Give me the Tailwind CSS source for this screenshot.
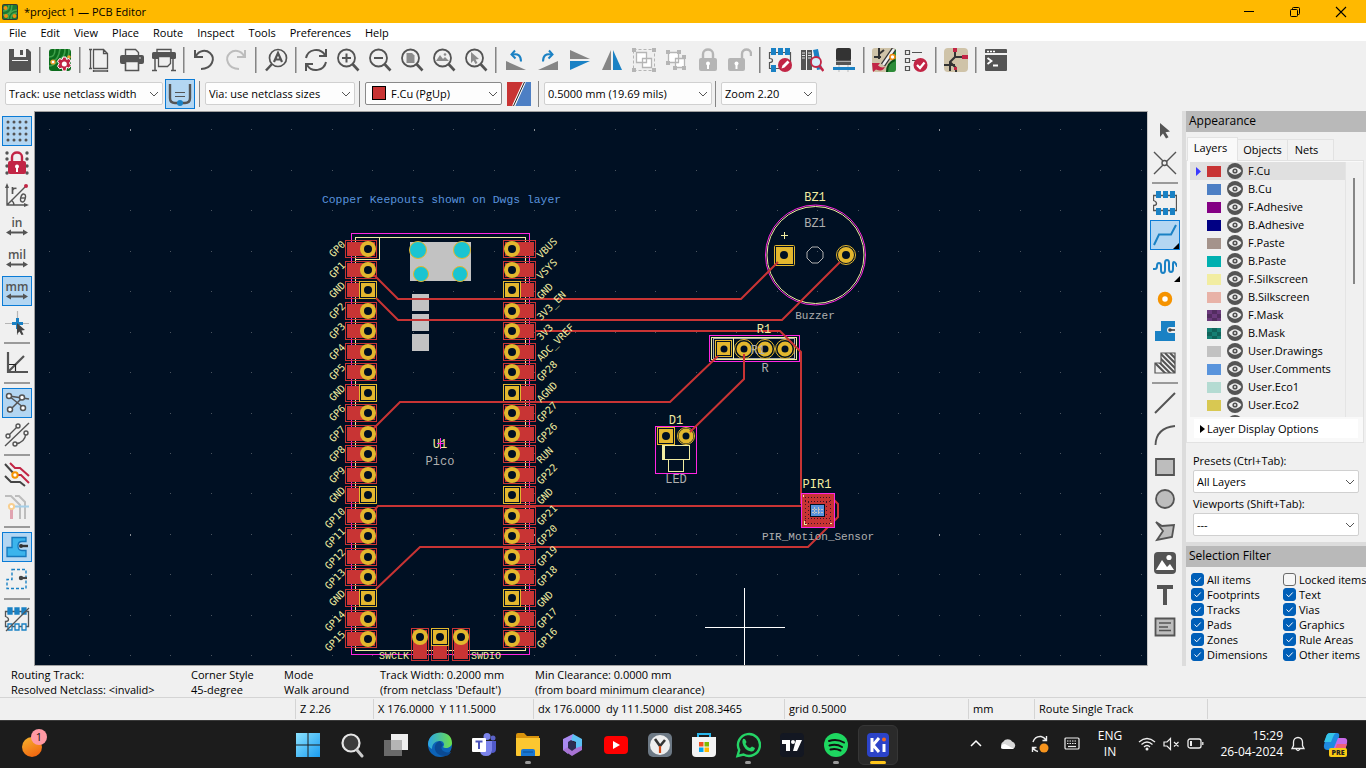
<!DOCTYPE html>
<html lang="en">
<head>
<meta charset="utf-8">
<title>*project 1 — PCB Editor</title>
<script src="https://cdn.jsdelivr.net/npm/@tailwindcss/browser@4"></script>
</head>
<body class="flex h-screen flex-col overflow-hidden bg-[#f0f0f0] font-['Open_Sans','Noto_Sans',sans-serif] text-[12px] leading-4 text-black">

<!-- Title bar -->
<header class="flex h-[23px] shrink-0 items-center bg-[#ffb900]">
  <svg class="ml-[2px] size-4" viewBox="0 0 16 16"><rect width="16" height="16" rx="2" fill="#333b33"/><rect x="1" y="1" width="14" height="14" rx="1" fill="#1d7a32"/><path d="M1 7c4 0 6-2 6-6M1 11c6 0 9-3 9-10M9 15c0-4 2-6 6-6M6 15c0-5 4-9 9-9" stroke="#4aa84f" stroke-width="1.4" fill="none"/><circle cx="3.500" cy="4" r="2" fill="#f09010"/><circle cx="4" cy="12" r="2" fill="#f09010"/><circle cx="12.500" cy="12" r="2" fill="#f09010"/></svg>
  <h1 class="ml-[6px] text-[11px]">*project 1 — PCB Editor</h1>
  <div class="ml-auto flex pr-[2px]">
    <button aria-label="Minimize" class="flex h-[22px] w-[46px] items-center justify-center"><svg width="12" height="12" viewBox="0 0 12 12"><path d="M1 5.500h10" stroke="#000"/></svg></button>
    <button aria-label="Restore" class="flex h-[22px] w-[46px] items-center justify-center"><svg width="12" height="12" viewBox="0 0 12 12" fill="none" stroke="#000"><rect x="1.500" y="3.500" width="7" height="7" rx="1"/><path d="M3.500 3.500v-1q0-1 1-1h5q1 0 1 1v5q0 1-1 1h-1"/></svg></button>
    <button aria-label="Close" class="flex h-[22px] w-[46px] items-center justify-center"><svg width="12" height="12" viewBox="0 0 12 12"><path d="M1 1l10 10M11 1L1 11" stroke="#000" stroke-width="1.100"/></svg></button>
  </div>
</header>

<!-- Menu bar -->
<nav aria-label="Main menu" class="flex h-[18px] shrink-0 items-center gap-[14px] bg-white pt-[2px] pl-[9px] text-[11px]">
  <button>File</button><button>Edit</button><button>View</button><button>Place</button><button>Route</button><button>Inspect</button><button>Tools</button><button>Preferences</button><button>Help</button>
</nav>

<!-- Main toolbar -->
<div role="toolbar" aria-label="Main" class="flex h-[37px] shrink-0 items-center pl-1 [&>button]:flex [&>button]:h-8 [&>button]:w-8 [&>button]:items-center [&>button]:justify-center [&>i]:mx-[3px] [&>i]:h-[26px] [&>i]:w-px [&>i]:bg-[#858585] [&>i]:border-r [&>i]:border-[#b8b8b8] [&>i]:box-content [&_svg]:size-6">
  <button aria-label="Save"><svg viewBox="0 0 24 24"><path d="M1 1h19l3 3v19H1z" fill="#545454"/><rect x="6" y="1" width="12" height="8" fill="#f0f0f0"/><rect x="12" y="2" width="3" height="5" fill="#545454"/><path d="M4 12h16v9H4z" fill="#f0f0f0"/><path d="M4 13h16v8H4z" fill="#545454"/></svg></button>
  <i></i>
  <button aria-label="Board setup"><svg viewBox="0 0 24 24"><rect x="1" y="1" width="22" height="22" rx="3" fill="#0c6c1c"/><path d="M1 9c5 0 6-3 6-8M2 14c7-1 9-6 10-13M1 18c5 0 7-3 10-6s6-3 6-11M21 1c0 7-1 9-3 11" stroke="#3fa04a" stroke-width="1.600" fill="none"/><circle cx="5" cy="14" r="2.600" fill="#f0a030"/><circle cx="5" cy="14" r="1.300" fill="#fff"/><circle cx="21" cy="9" r="1.800" fill="#f0a030"/><path d="M15 9h3l.6 2.400 2.400-1 2 2.600-1.500 2 1.500 2.500-2 2.700-2.400-.9L18 23h-3l-.8-3-2.700.8-2-2.600L11 15.500 9.500 13.300l2-2.700 2.600.9z" fill="#c22545" stroke="#fff" stroke-width="1"/><circle cx="16.300" cy="16" r="2.500" fill="#fff"/></svg></button>
  <i></i>
  <button aria-label="Page settings"><svg viewBox="0 0 24 24" fill="none" stroke="#545454" stroke-width="1.300"><path d="M5.500 1.500h10l4 4v15h-14zM15.500 1.500v4h4M1 1.500h3M1 20.500h3M2.500 2v18M5.500 22v2M19.500 22v2M6 23h13"/></svg></button>
  <button aria-label="Print"><svg viewBox="0 0 24 24"><path d="M5.500 1.500h10l3 3V8h-13z" fill="#f0f0f0" stroke="#545454" stroke-width="1.400"/><rect y="7" width="24" height="9" rx="2" fill="#545454"/><path d="M5.500 13.500h13v9h-13z" fill="#f0f0f0" stroke="#545454" stroke-width="1.600"/><circle cx="20" cy="10" r="1" fill="#aaa"/></svg></button>
  <button aria-label="Plot"><svg viewBox="0 0 24 24"><path d="M5 1.500h14V6H5z" fill="#f0f0f0" stroke="#545454" stroke-width="1.400"/><rect y="4" width="24" height="7" rx="1.500" fill="#545454"/><path d="M6.500 8.500h12v7l-3 3h-9z" fill="#f0f0f0" stroke="#545454" stroke-width="1.300"/><path d="M3 11v11M21 11v11M0 22.500h5M19 22.500h5" stroke="#545454" stroke-width="1.500"/></svg></button>
  <i></i>
  <button aria-label="Undo"><svg viewBox="0 0 24 24" fill="none" stroke="#545454" stroke-width="2"><path d="M3 2v7h8M4 8c3-6 10-6.500 14-3 6 5.500 2 16-9 16"/></svg></button>
  <button aria-label="Redo" disabled><svg viewBox="0 0 24 24" fill="none" stroke="#bdbdbd" stroke-width="2"><path d="M21 2v7h-8M20 8C17 2 10 1.500 6 5c-6 5.500-2 16 9 16"/></svg></button>
  <i></i>
  <button aria-label="Find"><svg viewBox="0 0 24 24" fill="none" stroke="#545454"><circle cx="14" cy="10" r="8.500" stroke-width="1.700"/><path d="M8 16l-6 6.500" stroke-width="2.500"/><path d="M10 14l4-9 4 9M11.500 11.500h5" stroke-width="2.200"/></svg></button>
  <i></i>
  <button aria-label="Refresh"><svg viewBox="0 0 24 24" fill="none" stroke="#545454" stroke-width="2"><path d="M2 10C4 1 16-1 21 7M22 1v7h-7M22 14c-2 9-14 11-19 3M2 23v-7h7"/></svg></button>
  <button aria-label="Zoom in"><svg viewBox="0 0 24 24" fill="none" stroke="#545454"><circle cx="10.500" cy="10" r="8.500" stroke-width="1.800"/><path d="M16.500 16l6 6.500" stroke-width="2.600"/><path d="M6 10h9M10.500 5.500v9" stroke-width="2"/></svg></button>
  <button aria-label="Zoom out"><svg viewBox="0 0 24 24" fill="none" stroke="#545454"><circle cx="10.500" cy="10" r="8.500" stroke-width="1.800"/><path d="M16.500 16l6 6.500" stroke-width="2.600"/><path d="M6 10h9" stroke-width="2"/></svg></button>
  <button aria-label="Zoom to fit"><svg viewBox="0 0 24 24" fill="none" stroke="#545454"><circle cx="10.500" cy="10" r="8.500" stroke-width="1.800"/><path d="M16.500 16l6 6.500" stroke-width="2.600"/><path d="M6.500 5h5.500l2.500 2.500V15h-8z" fill="#8c8c8c" stroke="none"/></svg></button>
  <button aria-label="Zoom to objects"><svg viewBox="0 0 24 24" fill="none" stroke="#545454"><circle cx="10.500" cy="10" r="8.500" stroke-width="1.800"/><path d="M16.500 16l6 6.500" stroke-width="2.600"/><path d="M4 13l4-6 3 4 2-2 4 4z" fill="#8c8c8c" stroke="none"/><circle cx="13" cy="6.500" r="1.300" fill="#8c8c8c" stroke="none"/></svg></button>
  <button aria-label="Zoom to selection"><svg viewBox="0 0 24 24" fill="none" stroke="#545454"><circle cx="10.500" cy="10" r="8.500" stroke-width="1.800"/><path d="M16.500 16l6 6.500" stroke-width="2.600"/><path d="M7 4l8 7-3.500.5 2 3.500-2 1-2-3.500L7 15z" fill="#8c8c8c" stroke="none"/></svg></button>
  <i></i>
  <button aria-label="Rotate counterclockwise"><svg viewBox="0 0 24 24"><path d="M2 13v9h20z" fill="#858585"/><path d="M9 6.500c5-1 8 1 8 7" stroke="#1a81c4" stroke-width="2" fill="none"/><path d="M11 2.500L7.500 6.500l4 4" stroke="#1a81c4" stroke-width="2" fill="none"/></svg></button>
  <button aria-label="Rotate clockwise"><svg viewBox="0 0 24 24"><path d="M22 13v9H2z" fill="#858585"/><path d="M15 6.500c-5-1-8 1-8 7" stroke="#1a81c4" stroke-width="2" fill="none"/><path d="M13 2.500l3.500 4-4 4" stroke="#1a81c4" stroke-width="2" fill="none"/></svg></button>
  <button aria-label="Mirror vertically"><svg viewBox="0 0 24 24"><path d="M2 2v9h20z" fill="#858585"/><path d="M2 22v-9h20z" fill="#1a81c4"/></svg></button>
  <button aria-label="Mirror horizontally"><svg viewBox="0 0 24 24"><path d="M2 22h9V2z" fill="#858585"/><path d="M22 22h-9V2z" fill="#1a81c4"/></svg></button>
  <button aria-label="Group" disabled><svg viewBox="0 0 24 24" stroke="#b5b5b5"><path d="M1.500 1.500h21v21h-21z" fill="none" stroke-dasharray="3 2"/><path d="M0 0h4v4H0zM20 0h4v4h-4zM0 20h4v4H0zM20 20h4v4h-4z" fill="#b5b5b5" stroke="none"/><path d="M4.500 4.500h10v10h-10zM10.500 10.500h9v9h-9z" fill="#fff" stroke-width="1.300"/></svg></button>
  <button aria-label="Ungroup" disabled><svg viewBox="0 0 24 24" stroke="#b5b5b5"><path d="M4.500 4.500h10v10h-10zM11.500 10.500h9v9h-9z" fill="#fff" stroke-width="1.300"/><path d="M2 2h4v4H2zM13 2h4v4h-4zM2 13h4v4H2zM9 18h4v4H9zM18 7h4v4h-4zM18 18h4v4h-4z" fill="#b5b5b5" stroke="none"/></svg></button>
  <button aria-label="Lock" disabled><svg viewBox="0 0 24 24"><path d="M7 11V6c0-6 10-6 10 0v5" fill="none" stroke="#b5b5b5" stroke-width="2.400"/><rect x="3" y="10" width="18" height="13" rx="2" fill="#b5b5b5"/><circle cx="12" cy="15.500" r="2" fill="#fff"/><path d="M11 16h2v5h-2z" fill="#fff"/></svg></button>
  <button aria-label="Unlock" disabled><svg viewBox="0 0 24 24"><path d="M14 11V6c0-6 9-6 9 0v2" fill="none" stroke="#b5b5b5" stroke-width="2.400"/><rect x="0" y="10" width="17" height="13" rx="2" fill="#b5b5b5"/><circle cx="8.500" cy="15.500" r="2" fill="#fff"/><path d="M7.500 16h2v5h-2z" fill="#fff"/></svg></button>
  <i></i>
  <button aria-label="Footprint editor"><svg viewBox="0 0 24 24"><path d="M22.500 4.500h-21v6q3 0 3 2t-3 2v6h21z" fill="none" stroke="#545454" stroke-width="1.200"/><path d="M3 0h5v7H3zM10 0h5v7h-5zM17 0h5v7h-5zM3 17h5v7H3z" fill="#1a81c4"/><circle cx="17" cy="17" r="7" fill="#c22545"/><path d="M13.500 20.500l1-3 5-5 2 2-5 5z" fill="#fff"/></svg></button>
  <button aria-label="Footprint libraries"><svg viewBox="0 0 24 24"><path d="M1 2h5v20H1zM7 2h5v20H7z" fill="#545454"/><path d="M2 5h3M2 7.500h3M2 10h3M8 5h3M8 7.500h3M8 10h3" stroke="#ddd"/><path d="M13 2l5-1 4 20-5 1z" fill="#1a81c4"/><circle cx="16" cy="14" r="5" fill="#d8ecf8" stroke="#c22545" stroke-width="1.800"/><path d="M19.500 18l4 5" stroke="#c22545" stroke-width="2.600"/></svg></button>
  <button aria-label="3D viewer"><svg viewBox="0 0 24 24"><rect x="4" y="0" width="15" height="13" rx="2" fill="#333"/><path d="M4 12h15v5H4z" fill="#545454"/><path d="M4 13.500h15" stroke="#aaa"/><path d="M7 17v7M16 17v7" stroke="#bbb"/><path d="M1 19h22v3H1z" fill="#1a81c4"/></svg></button>
  <i></i>
  <button aria-label="Update from schematic"><svg viewBox="0 0 24 24"><rect width="24" height="24" rx="3" fill="#cfc3a8"/><path d="M14 24L24 7v14q0 3-3 3z" fill="#2c8c38"/><path d="M17 8L24 1v8z" fill="#2c8c38"/><path d="M7 0v11M2 9h7M7 6l5-4" stroke="#333" stroke-width="2"/><path d="M11 17L22 1" stroke="#333" stroke-width="5"/><path d="M11 17L22 1" stroke="#f0f0f0" stroke-width="2.500"/><circle cx="20.500" cy="9" r="2.500" fill="#fff" stroke="#f08c10" stroke-width="1.600"/><path d="M15 24c0-6 3-10 8-12" stroke="#0a4f16" stroke-width="2" fill="none"/><path d="M0 15h8l-2 2.500q4 3.500 7 1-2 6-9 3L1 24z" fill="#c22545"/></svg></button>
  <button aria-label="Design rules checker"><svg viewBox="0 0 24 24" fill="none" stroke="#545454"><path d="M1.500 2.500h4v4h-4zM1.500 10.500h4v4h-4zM1.500 18.500h4v4h-4zM8 4.500h10M8 12.500h5" stroke-width="1.200"/><circle cx="16.500" cy="17" r="7" fill="#c22545" stroke="none"/><path d="M13 17l3 3 4.500-5.500" stroke="#fff" stroke-width="2.200"/></svg></button>
  <i></i>
  <button aria-label="Schematic editor"><svg viewBox="0 0 24 24"><rect width="24" height="24" rx="4" fill="#cfc3a8"/><path d="M11 2v7l-5 5v9M11 9h11M6 17H0M6 14l6 6v4M2 17h9" stroke="#333" stroke-width="2" fill="none"/><path d="M9 0h4v4H9zM18 7h6v4h-6zM10 19h3v3h-3z" fill="#c22545"/></svg></button>
  <i></i>
  <button aria-label="Scripting console"><svg viewBox="0 0 24 24"><path d="M1 2q0-1 1-1h20q1 0 1 1v3H1zM1 7h22v15q0 1-1 1H2q-1 0-1-1z" fill="#545454"/><path d="M3 3.500h2M6 3.500h2M9 3.500h2" stroke="#fff" stroke-width="1.500"/><path d="M3.500 10l4 3-4 3M9 17.500h5" stroke="#fff" stroke-width="1.800" fill="none"/></svg></button>
</div>

<!-- Track, via, layer, grid and zoom selectors -->
<div role="toolbar" aria-label="Properties" class="flex h-[33px] shrink-0 items-center pb-[2px] pl-[5px] text-[11px] [&>i]:h-[26px] [&>i]:w-px [&>i]:bg-[#858585] [&_select]:h-[23px] [&_select]:w-full [&_select]:appearance-none [&_select]:rounded-[2px] [&_select]:border [&_select]:border-[#d0d0d0] [&_select]:bg-[#fdfdfd] [&_select]:pl-[3px] [&>div]:relative">
  <div class="w-[158px]"><select aria-label="Track width"><option>Track: use netclass width</option></select><svg class="pointer-events-none absolute top-2 right-1 h-2 w-[10px]" viewBox="0 0 10 8" fill="none" stroke="#555"><path d="M1 2l4 4 4-4"/></svg></div>
  <button aria-label="Use existing track width" class="ml-[2px] flex size-[30px] items-center justify-center border border-[#0a7bd6] bg-[#b3d6f2]"><svg width="24" height="24" viewBox="0 0 24 24" fill="none" stroke="#545454" stroke-width="2.400"><path d="M2 2v14q0 5 5 5h10q5 0 5-5V2"/><path d="M7 10.500h10M7 14.500h10" stroke-width="1.200"/><circle cx="12" cy="21" r="3" fill="#1a81c4" stroke="none"/></svg></button>
  <i class="mx-[4px]"></i>
  <div class="ml-px w-[150px]"><select aria-label="Via size"><option>Via: use netclass sizes</option></select><svg class="pointer-events-none absolute top-2 right-1 h-2 w-[10px]" viewBox="0 0 10 8" fill="none" stroke="#555"><path d="M1 2l4 4 4-4"/></svg></div>
  <i class="mx-[4px]"></i>
  <div class="ml-px w-[137px]"><select aria-label="Active layer" class="border-[#8a8a8a]! pl-[25px]!"><option>F.Cu (PgUp)</option></select><span class="pointer-events-none absolute top-[4px] left-[7px] size-[14px] border border-black bg-[#c83434]"></span><svg class="pointer-events-none absolute top-2 right-1 h-2 w-[10px]" viewBox="0 0 10 8" fill="none" stroke="#555"><path d="M1 2l4 4 4-4"/></svg></div>
  <button aria-label="Layer pair" class="ml-[5px]"><svg width="24" height="24" viewBox="0 0 24 24"><path d="M0 0h17L6 24H0z" fill="#c83434"/><path d="M18 0h6v24H8z" fill="#4d7fc4"/><path d="M17.500 0L6.500 24" stroke="#fff" stroke-width="3"/><path d="M17.500 0L6.500 24" stroke="#222" stroke-width="1"/></svg></button>
  <i class="mr-[5px] ml-[7px]"></i>
  <div class="w-[168px]"><select aria-label="Grid"><option>0.5000 mm (19.69 mils)</option></select><svg class="pointer-events-none absolute top-2 right-1 h-2 w-[10px]" viewBox="0 0 10 8" fill="none" stroke="#555"><path d="M1 2l4 4 4-4"/></svg></div>
  <i class="mr-[5px] ml-[3px]"></i>
  <div class="w-[96px]"><select aria-label="Zoom"><option>Zoom 2.20</option></select><svg class="pointer-events-none absolute top-2 right-1 h-2 w-[10px]" viewBox="0 0 10 8" fill="none" stroke="#555"><path d="M1 2l4 4 4-4"/></svg></div>
</div>

<main class="flex min-h-0 flex-1">
  <!-- Display options -->
  <div role="toolbar" aria-label="Display options" class="flex w-[34px] shrink-0 flex-col items-center pt-1 pr-px [&>button]:my-px [&>button]:flex [&>button]:size-[30px] [&>button]:shrink-0 [&>button]:items-center [&>button]:justify-center [&>i]:my-[3px] [&>i]:h-[2px] [&>i]:w-[26px] [&>i]:shrink-0 [&>i]:bg-[#9a9a9a] [&_svg]:size-6 [&_svg]:overflow-visible [&>button[aria-pressed]]:border [&>button[aria-pressed]]:border-[#0a7bd6] [&>button[aria-pressed]]:bg-[#b3d6f2]">
    <button aria-label="Show grid" aria-pressed="true"><svg viewBox="0 0 24 24"><path d="M3 3h.01M9 3h.01M15 3h.01M21 3h.01M3 9h.01M9 9h.01M15 9h.01M21 9h.01M3 15h.01M9 15h.01M15 15h.01M21 15h.01M3 21h.01M9 21h.01M15 21h.01M21 21h.01" stroke="#545454" stroke-width="3" stroke-linecap="round"/></svg></button>
    <button aria-label="Grid overrides"><svg viewBox="0 0 24 24"><path d="M2 2h.01M22 2h.01M2 8h.01M22 8h.01M2 15h.01M22 15h.01M2 22h.01M22 22h.01" stroke="#545454" stroke-width="3.400" stroke-linecap="round"/><path d="M7 11V6c0-6 10-6 10 0v5" fill="none" stroke="#c22545" stroke-width="2.400"/><rect x="3" y="10" width="18" height="13" rx="2" fill="#c22545"/><circle cx="12" cy="15.500" r="2" fill="#fff"/><path d="M11 16h2v5h-2z" fill="#fff"/></svg></button>
    <button aria-label="Polar coordinates"><svg viewBox="0 0 24 24" fill="none" stroke="#545454" stroke-width="1.400"><path d="M2 2v20h20M2 22L20 4M6 17q3 2 3 5"/><path d="M2 0L0 5h4zM24 22l-5-2v4z" fill="#545454" stroke="none"/><circle cx="21" cy="3" r="2" fill="#c22545" stroke="none"/><path d="M7.500 4v7M7.500 7.500q1-3 4-2" stroke-width="1.700"/><ellipse cx="18" cy="15" rx="2.300" ry="4" transform="rotate(15 18 15)"/><path d="M16 15h4"/></svg></button>
    <button aria-label="Inches"><svg viewBox="0 0 24 24"><text x="12" y="12" text-anchor="middle" font-size="12" font-weight="600" fill="#545454">in</text><path d="M1 17.500l5-3v2h12v-2l5 3-5 3v-2H6v2z" fill="#545454"/></svg></button>
    <button aria-label="Mils"><svg viewBox="0 0 24 24"><text x="12" y="12" text-anchor="middle" font-size="12" font-weight="600" fill="#545454">mil</text><path d="M1 17.500l5-3v2h12v-2l5 3-5 3v-2H6v2z" fill="#545454"/></svg></button>
    <button aria-label="Millimeters" aria-pressed="true"><svg viewBox="0 0 24 24"><text x="12" y="12" text-anchor="middle" font-size="12" font-weight="600" fill="#545454">mm</text><path d="M1 17.500l5-3v2h12v-2l5 3-5 3v-2H6v2z" fill="#545454"/></svg></button>
    <button aria-label="Full-window crosshairs"><svg viewBox="0 0 24 24"><path d="M0 12.500h24M12.500 0v24" stroke="#b5b5b5" stroke-width="1.200"/><path d="M7 12.500h11M12.500 7v11" stroke="#1a81c4" stroke-width="3"/><path d="M12 12l8 7-3.500.5 2 4-2 .5-2-3.500L12 23z" fill="#444"/></svg></button>
    <i></i>
    <button aria-label="Limit to 45 degrees"><svg viewBox="0 0 24 24" fill="none" stroke="#545454" stroke-width="2.200"><path d="M3 1v20h20M3 21L19 5"/><path d="M4 13.500h6.500V20" stroke-width="1.200" stroke="#222"/></svg></button>
    <i></i>
    <button aria-label="Show ratsnest" aria-pressed="true"><svg viewBox="0 0 24 24" stroke="#545454" stroke-width="1.500"><path d="M4 5l15 12M6 18L17 7M4 5l20 3"/><g fill="#fff"><circle cx="4" cy="5" r="2.500"/><circle cx="17" cy="6.500" r="2.500"/><circle cx="5" cy="18.500" r="2.500"/><circle cx="18" cy="17" r="2.500"/></g></svg></button>
    <button aria-label="Curved ratsnest"><svg viewBox="0 0 24 24" stroke="#545454" stroke-width="1.400" fill="none"><path d="M0 23L24 0M3 13L13 3M10 21q10-1 11-11"/><g fill="#f0f0f0"><circle cx="3" cy="13" r="2"/><circle cx="13" cy="3" r="2"/><circle cx="10" cy="21" r="2"/><circle cx="21" cy="10" r="2"/></g></svg></button>
    <i></i>
    <button aria-label="Inactive layer view"><svg viewBox="0 0 24 24" fill="none" stroke-width="2"><path d="M5 0l5 5h5l9 8" stroke="#c22545"/><path d="M12 12h4l8 8" stroke="#c22545"/><path d="M0 1l10 11M0 13l6 6h9l5 4" stroke="#444"/><circle cx="10" cy="12" r="2.700" fill="#fff" stroke="#f59300"/></svg></button>
    <button aria-label="Net color mode"><svg viewBox="0 0 24 24" fill="none" stroke-width="2"><path d="M0 1h6l9 9v14M10 1h4l6 6v17" stroke="#bdbdbd"/><path d="M8 11.500h16" stroke="#a5cfe8"/><path d="M6.500 14v10" stroke="#e0a3b0" stroke-width="3"/><circle cx="6.500" cy="11.500" r="2.600" fill="#fff" stroke="#f8cf90"/></svg></button>
    <i></i>
    <button aria-label="Show filled zones" aria-pressed="true"><svg viewBox="0 0 24 24"><path d="M7 2.500h14v4h-4q-4 0-4 4.500t4 4.500h4v6H2v-9h5z" fill="#3bb4ec" stroke="#1478bd" stroke-width="1.300"/><path d="M16 11h7" stroke="#333" stroke-width="2.400"/><circle cx="16" cy="11" r="2" fill="#333"/></svg></button>
    <button aria-label="Zone outlines"><svg viewBox="0 0 24 24"><path d="M7 2.500h14v19H2v-9h5z" fill="none" stroke="#1a81c4" stroke-width="1.400" stroke-dasharray="3 2"/><path d="M14 11h8" stroke="#444" stroke-width="2.200"/><circle cx="16" cy="11" r="2.200" fill="#444"/></svg></button>
    <i></i>
    <button aria-label="Sketch pads"><svg viewBox="0 0 24 24" fill="none" stroke="#545454" stroke-width="1.300"><path d="M23.500 4.500H.5v5q3 1 3 3t-3 2v5h23z"/><path d="M3 1h4v6H3zM10 1h4v6h-4zM17 1h4v6h-4z" fill="#1a81c4" stroke="#1a81c4"/><path d="M3 17h4v6H3zM10 17h4v6h-4zM17 17h4v6h-4z" fill="#f0f0f0" stroke="#1a81c4"/><path d="M1 24L24 1"/></svg></button>
  </div>

  <!-- Board canvas -->
  <div class="min-w-0 flex-1 border border-t-[#a0a0a0] border-r-[#c8c8c8] border-b-[#a0a0a0] border-l-[#a0a0a0] bg-[#001023]">
    <svg id="board" class="block size-full" viewBox="35 112 1112 553" preserveAspectRatio="xMidYMid slice" fill="none" role="img" aria-label="PCB layout">
      <g id="grid"></g>
      <g shape-rendering="crispEdges">
        <path d="M410 242h61v39h-61zM412 294h17v17h-17zM412 314h17v17h-17zM412 334h17v17h-17z" fill="#c2c2c2"/>
        <rect x="351.500" y="233.500" width="178" height="421" stroke="#ff26e2"/>
        <path d="M355.500 237.500h170v413h-170zM379.500 237.500v22h-24" stroke="#f2eda1"/>
      </g>
      <g fill="#1ac4d2" stroke="#e3b72e"><circle cx="418" cy="250" r="8.500"/><circle cx="462" cy="250" r="8.500"/><circle cx="421" cy="274" r="7.500"/><circle cx="460" cy="274" r="7.500"/></g>
      <g id="pads"></g>

      <!-- BZ1 -->
      <circle cx="815.500" cy="255" r="50" stroke="#ff26e2"/><circle cx="815.500" cy="255" r="48.500" stroke="#f2eda1"/>
      <path d="M812 247h6l5 5v6l-5 5h-6l-5-5v-6z" stroke="#afafaf"/>
      <rect x="774.500" y="245.500" width="20" height="20" rx="1" stroke="#e3b72e"/><rect x="776" y="247" width="17" height="17" fill="#e3b72e"/><circle cx="784" cy="255" r="4" fill="#001023"/>
      <circle cx="846" cy="255" r="9.500" stroke="#e3b72e"/><circle cx="846" cy="255" r="6" stroke="#e3b72e" stroke-width="4"/>
      <path d="M781 235.500h7M784.500 232v7" stroke="#f2eda1"/>

      <!-- R1 -->
      <g shape-rendering="crispEdges"><rect x="709.500" y="335.500" width="90" height="26" stroke="#ff26e2"/><rect x="711.500" y="337.500" width="85" height="22" stroke="#f2eda1"/><rect x="713.500" y="338.500" width="81" height="20" stroke="#afafaf"/><path d="M733.500 338v21" stroke="#f2eda1"/><rect x="715.500" y="340.500" width="16" height="16" stroke="#e3b72e"/><rect x="717" y="342" width="13" height="13" fill="#e3b72e"/></g>
      <circle cx="724" cy="349" r="3.500" fill="#001023"/>
      <g stroke="#e3b72e"><circle cx="744" cy="349" r="9.500"/><circle cx="765" cy="349" r="9.500"/><circle cx="785" cy="349" r="9.500"/><g stroke-width="4"><circle cx="744" cy="349" r="5.500"/><circle cx="765" cy="349" r="5.500"/><circle cx="785" cy="349" r="5.500"/></g></g>

      <!-- D1 -->
      <g shape-rendering="crispEdges"><rect x="655.500" y="426.500" width="41" height="47" stroke="#ff26e2"/><rect x="657.500" y="427.500" width="17" height="17" stroke="#e3b72e"/><rect x="659" y="429" width="14" height="14" fill="#e3b72e"/><path d="M662.500 445.500h27v14h-27zM668.500 459.500h15v12h-15zM663.500 445v14M664.500 445v14" stroke="#f2eda1"/></g>
      <circle cx="666" cy="436" r="4" fill="#001023"/><circle cx="686" cy="436" r="8.500" stroke="#e3b72e"/><circle cx="686" cy="436" r="5.500" stroke="#e3b72e" stroke-width="4"/>

      <!-- Routed tracks on F.Cu -->
      <path d="M374 275l24 24H741l37-37M376 298l22 22H782l58-58M535 331h245l21 21V504M374 428l26-26h270l48-46M744 354v25L690 432M374 511l4-5h425M376 589l44-42h388l30-30v-13l-10-10" stroke="#c83434" stroke-width="2"/>

      <!-- PIR1 -->
      <g shape-rendering="crispEdges"><rect x="802" y="494" width="32" height="33" fill="#c83434"/><path d="M805 497.500h26M805 501.500h26M805 518.500h26M805 523.500h26" stroke="#3a1024" stroke-dasharray="1 2"/><path d="M805.500 500v22M808.500 502v18M826.500 502v18M830.500 500v22" stroke="#3a1024" stroke-dasharray="1 3"/><rect x="810" y="504" width="15" height="13" fill="#001023"/><rect x="811" y="505" width="13" height="11" fill="#5a93dd"/><path d="M812 509.500h11M812 512.500h11M814.500 507v7M818.500 507v7" stroke="#c2c2c2" stroke-dasharray="2 1"/><rect x="801.500" y="493.500" width="33" height="34" stroke="#ff26e2"/><path d="M803 494.500v2M804 521v3h3M830 523h2" stroke="#f2eda1"/></g>

      <g id="labels" class="font-['DejaVu_Sans_Mono',monospace]" font-size="10" fill="#f2eda1"></g>
      <g class="font-['Liberation_Mono',monospace]" font-size="12" text-anchor="middle">
        <text x="441.500" y="203" fill="#5a93dd" font-size="11.400">Copper Keepouts shown on Dwgs layer</text>
        <g fill="#f2eda1"><text x="815" y="201">BZ1</text><text x="764" y="333">R1</text><text x="676" y="424">D1</text><text x="817" y="488">PIR1</text><text x="440" y="448">U1</text></g>
        <g fill="#afafaf"><text x="815" y="227">BZ1</text><text x="815" y="319" font-size="11">Buzzer</text><text x="758" y="354">R1</text><text x="765" y="372">R</text><text x="676" y="483">LED</text><text x="440" y="465">Pico</text><text x="818" y="540" font-size="11">PIR_Motion_Sensor</text></g>
        <g fill="#f2eda1" font-size="10"><text x="394" y="659">SWCLK</text><text x="486" y="659">SWDIO</text></g>
      </g>
      <path d="M437 443.500h7M440.500 438v11" stroke="#ff26e2"/>
      <path d="M705 627.500h80M744.500 588v78" stroke="#fff" shape-rendering="crispEdges"/>
    </svg>
  </div>

  <!-- Drawing tools -->
  <div role="toolbar" aria-label="Tools" class="flex w-[34px] shrink-0 flex-col items-center pt-1 [&>button]:relative [&>button]:my-px [&>button]:flex [&>button]:size-[30px] [&>button]:shrink-0 [&>button]:items-center [&>button]:justify-center [&>i]:my-[3px] [&>i]:h-[2px] [&>i]:w-[26px] [&>i]:shrink-0 [&>i]:bg-[#9a9a9a] [&_svg]:size-6 [&>button[aria-pressed]]:border [&>button[aria-pressed]]:border-[#0a7bd6] [&>button[aria-pressed]]:bg-[#b3d6f2]">
    <button aria-label="Select"><svg viewBox="0 0 24 24"><path d="M7 4l10 8.500-4.500.7 3 5-2.500 1.300-3-5L7 18z" fill="#545454"/></svg></button>
    <button aria-label="Local ratsnest"><svg viewBox="0 0 24 24" fill="none" stroke="#545454" stroke-width="1.400"><path d="M1 1l22 22M23 1L1 23"/><circle cx="11.500" cy="12" r="2.500" fill="#f0f0f0"/></svg></button>
    <i></i>
    <button aria-label="Add footprint"><svg viewBox="0 0 24 24"><path d="M23.500 4.500H.5v5q3 1 3 3t-3 2v5h23z" fill="none" stroke="#545454" stroke-width="1.300"/><path d="M3 0h5v7H3zM10 0h5v7h-5zM17 0h5v7h-5zM3 17h5v7H3zM10 17h5v7h-5zM17 17h5v7h-5z" fill="#1a81c4"/></svg></button>
    <button aria-label="Route tracks" aria-pressed="true"><svg viewBox="0 0 24 24"><path d="M1 22l5-10.500h12L23 2" fill="none" stroke="#1a81c4" stroke-width="2"/></svg><svg class="absolute right-0 bottom-0 size-[6px]!" viewBox="0 0 6 6"><path d="M6 0v6H0z"/></svg></button>
    <button aria-label="Tune length"><svg viewBox="0 0 24 24"><path d="M0 14h2q2 0 2-3 0-3 2-3t2 3v4q0 3 2 3t2-3V8q0-3 2-3t2 3v6q0 3 2 3t2-3V9q0-2 1-2t2 2 1 2h2" fill="none" stroke="#1a81c4" stroke-width="2"/></svg><svg class="absolute right-0 bottom-0 size-[6px]!" viewBox="0 0 6 6"><path d="M6 0v6H0z"/></svg></button>
    <button aria-label="Add via"><svg viewBox="0 0 24 24"><circle cx="12" cy="12" r="5" fill="#fff" stroke="#f59300" stroke-width="4.500"/></svg></button>
    <button aria-label="Add zone"><svg viewBox="0 0 24 24"><path d="M8 2h14v6h-5q-3 0-3 3t3 3h5v8H2V12h6z" fill="#1a81c4"/><path d="M17 11h5" stroke="#444" stroke-width="1.600"/><circle cx="17" cy="11" r="1.800" fill="#444"/></svg></button>
    <button aria-label="Add rule area"><svg viewBox="0 0 24 24"><defs><clipPath id="keepout"><path d="M8 2h14v20H2V12h6z"/></clipPath></defs><path clip-path="url(#keepout)" d="M-8 2l22 22M-3 2l22 22M2 2l22 22M7 2l22 22M12 2l22 22M17 2l22 22" stroke="#545454" stroke-width="2"/><path d="M8 2h14v20H2V12h6z" fill="none" stroke="#545454" stroke-width="1.200"/></svg></button>
    <i></i>
    <button aria-label="Draw line"><svg viewBox="0 0 24 24"><path d="M2 22L22 2" stroke="#545454" stroke-width="2"/></svg></button>
    <button aria-label="Draw arc"><svg viewBox="0 0 24 24"><path d="M2.500 22Q3 5 22 3" fill="none" stroke="#545454" stroke-width="1.800"/></svg></button>
    <button aria-label="Draw rectangle"><svg viewBox="0 0 24 24"><path d="M3 4h18v16H3z" fill="#bdbdbd" stroke="#545454" stroke-width="1.800"/></svg></button>
    <button aria-label="Draw circle"><svg viewBox="0 0 24 24"><circle cx="12" cy="12" r="9" fill="#bdbdbd" stroke="#545454" stroke-width="1.800"/></svg></button>
    <button aria-label="Draw polygon"><svg viewBox="0 0 24 24"><path d="M3 3l6 4 12-1-2 12-15 3 6-9z" fill="#bdbdbd" stroke="#545454" stroke-width="1.800"/></svg></button>
    <button aria-label="Add image"><svg viewBox="0 0 24 24"><rect x="1" y="1" width="22" height="22" rx="4" fill="#545454"/><path d="M3 19l6-10 5 7 3-3 4 6z" fill="#fff"/><circle cx="16" cy="6.500" r="2.600" fill="#fff"/></svg></button>
    <button aria-label="Add text"><svg viewBox="0 0 24 24"><path d="M4 2h16v4h-6v16h-4V6H4z" fill="#545454"/></svg></button>
    <button aria-label="Add text box"><svg viewBox="0 0 24 24"><path d="M2.500 3.500h19v17h-19z" fill="#bdbdbd" stroke="#545454" stroke-width="1.800"/><path d="M6 8h12M6 12h9M6 15.500h12" stroke="#545454" stroke-width="1.500"/></svg></button>
  </div>

  <!-- Side panels -->
  <aside class="flex w-[184px] shrink-0 flex-col border-l-4 border-[#dcdcdc]">
    <h2 class="h-[21px] shrink-0 bg-[#b9b9b9] pl-[3px] leading-5">Appearance</h2>
    <div role="tablist" class="mt-[5px] flex h-[23px] shrink-0 items-end pl-px text-center">
      <button role="tab" aria-selected="true" class="z-10 -mb-px h-6 w-[51px] border border-b-0 border-[#e2e2e2] bg-[#f9f9f9] pr-1 pb-1 text-[11px]">Layers</button>
      <button role="tab" class="h-[21px] w-[50px] border border-b-0 border-l-0 border-[#e2e2e2] bg-[#f2f2f2] text-[11px]">Objects</button>
      <button role="tab" class="h-[21px] w-[46px] border border-b-0 border-l-0 border-[#e2e2e2] bg-[#f2f2f2] pr-2 text-[11px]">Nets</button>
    </div>
    <div class="mr-[2px] flex h-[283px] shrink-0 flex-col border border-[#e2e2e2] bg-[#f9f9f9] pt-px pl-[3px]">
      <div class="flex h-[255px] shrink-0 overflow-hidden bg-[#f0f0f0]">
        <ul id="layers" class="w-[156px] border-r border-[#e4e4e4]"></ul>
        <div class="mt-4 ml-[7px] h-[106px] w-[2px] bg-[#868686]"></div>
      </div>
      <button class="mt-[2px] mr-[5px] ml-1 flex h-[19px] shrink-0 items-center gap-[2px] bg-white pl-[6px] text-[11px]"><svg width="5" height="8" viewBox="0 0 5 8"><path d="M0 0l5 4-5 4z"/></svg>Layer Display Options</button>
    </div>
    <div class="flex flex-col px-[7px] pt-[10px] text-[11px]">
      <label for="presets">Presets (Ctrl+Tab):</label>
      <div class="relative mt-px"><select id="presets" class="h-[23px] w-full appearance-none rounded-[2px] border border-[#d0d0d0] bg-white pl-[3px]"><option>All Layers</option></select><svg class="pointer-events-none absolute top-2 right-1 h-2 w-[10px]" viewBox="0 0 10 8" fill="none" stroke="#555"><path d="M1 2l4 4 4-4"/></svg></div>
      <label for="viewports" class="mt-[3px]">Viewports (Shift+Tab):</label>
      <div class="relative mt-px"><select id="viewports" class="h-[23px] w-full appearance-none rounded-[2px] border border-[#d0d0d0] bg-white pl-[3px]"><option>---</option></select><svg class="pointer-events-none absolute top-2 right-1 h-2 w-[10px]" viewBox="0 0 10 8" fill="none" stroke="#555"><path d="M1 2l4 4 4-4"/></svg></div>
    </div>
    <h2 class="mt-[6px] h-[25px] shrink-0 border-t-4 border-[#dcdcdc] bg-[#b9b9b9] pl-[3px] leading-5">Selection Filter</h2>
    <div id="filters" class="mt-[5px] grid grid-cols-[92px_1fr] pl-[5px] text-[11px]"></div>
  </aside>
</main>

<!-- Message panel -->
<section class="flex h-8 shrink-0 border-b border-[#d4d4d4] pt-[1px] pl-[11px] text-[11px] leading-[15px] whitespace-nowrap">
  <p class="w-[180px]">Routing Track:<br>Resolved Netclass: &lt;invalid&gt;</p>
  <p class="w-[93px]">Corner Style<br>45-degree</p>
  <p class="w-[96px]">Mode<br>Walk around</p>
  <p class="w-[155px]">Track Width: 0.2000 mm<br>(from netclass 'Default')</p>
  <p>Min Clearance: 0.0000 mm<br>(from board minimum clearance)</p>
</section>
<footer class="flex h-[22px] shrink-0 items-center text-[11px] whitespace-pre [&>span]:h-[20px] [&>span]:border-r [&>span]:border-[#d4d4d4] [&>span]:pl-[4px] [&>span]:leading-5">
  <span class="w-[296px]"></span><span class="w-[78px]">Z 2.26</span><span class="w-[160px]">X 176.0000  Y 111.5000</span><span class="w-[251px]">dx 176.0000  dy 111.5000  dist 208.3465</span><span class="w-[184px]">grid 0.5000</span><span class="w-[66px]">mm</span><span class="w-[173px]">Route Single Track</span>
</footer>

<!-- Taskbar -->
<nav aria-label="Taskbar" class="flex h-12 shrink-0 items-center border-t border-[#3a3a3a] bg-[#1c1c1c] text-white [&_button]:flex [&_button]:shrink-0 [&_button]:items-center [&_button]:justify-center">
  <div class="w-[286px] shrink-0 pl-5"><button aria-label="Widgets"><svg width="28" height="32" viewBox="0 0 28 32"><defs><linearGradient id="sun" x1="0" y1="0" x2="0.500" y2="1"><stop stop-color="#f5b52e"/><stop offset="1" stop-color="#f26a12"/></linearGradient></defs><circle cx="12" cy="18" r="10" fill="url(#sun)"/><circle cx="19" cy="8" r="8" fill="#ff99a4"/><text x="19" y="12" font-size="11" text-anchor="middle" fill="#111">1</text></svg></button></div>
  <div class="flex items-center [&>button]:relative [&>button]:h-12 [&>button]:w-11 [&_svg]:size-[26px]">
    <button aria-label="Start"><svg viewBox="0 0 26 26"><defs><linearGradient id="win" x1="0" y1="0" x2="1" y2="1"><stop stop-color="#8be2ff"/><stop offset="1" stop-color="#1a9cf0"/></linearGradient></defs><path d="M1 1h11.500v11.500H1zM13.500 1H25v11.500H13.500zM1 13.500h11.500V25H1zM13.500 13.500H25V25H13.500z" fill="url(#win)"/></svg></button>
    <button aria-label="Search"><svg viewBox="0 0 26 26"><circle cx="12" cy="11" r="8.500" fill="#3c3c3c" stroke="#e6e6e6" stroke-width="2.200"/><path d="M18 18l5 6" stroke="#ccc" stroke-width="3" stroke-linecap="round"/></svg></button>
    <button aria-label="Task view"><svg viewBox="0 0 26 26"><path d="M1 8h18v16H1z" fill="#6a6a6a"/><path d="M8 2h17v16H8z" fill="#eee"/><path d="M8 8h11v10H8z" fill="#b5b5b5"/></svg></button>
    <button aria-label="Edge"><svg viewBox="0 0 26 26"><defs><linearGradient id="edge" x1="0" y1="0" x2="1" y2="0"><stop stop-color="#2aa4e8"/><stop offset="1" stop-color="#6de04a"/></linearGradient></defs><circle cx="13" cy="13" r="12" fill="#0c63b8"/><path d="M1 12C2-3 25-3 25 11c0 5-7 6-9 4 2-2 1-6-3-6-5 0-8 3-8 8-3-2-4-3-4-5z" fill="url(#edge)"/><path d="M13 9c-8 2-7 15 5 15 3 0 5-2 6-4-8 2-12-4-8-7z" fill="#0a4a94"/></svg></button>
    <button aria-label="Teams"><svg viewBox="0 0 26 26"><circle cx="22" cy="6" r="2.500" fill="#5b62c8"/><circle cx="16" cy="4.500" r="3.500" fill="#7b83eb"/><path d="M18 9h7v8q0 4-4 4z" fill="#5059c9"/><path d="M10 9h11v9q0 6-6 6t-6-6z" fill="#7b83eb"/><rect x="1" y="6" width="14" height="14" rx="1" fill="#fff"/><path d="M4.500 9.500h7M8 9.500V17" stroke="#4b53bc" stroke-width="2"/></svg></button>
    <button aria-label="File Explorer"><svg viewBox="0 0 26 26"><path d="M1 3q0-2 2-2h6l3 3h12v8H1z" fill="#d9930c"/><path d="M1 6h24v17q0 1-1 1H2q-1 0-1-1z" fill="#fcc730"/><path d="M6 24v-5q0-2 2-2h10q2 0 2 2v5z" fill="#1976d2"/><path d="M8 20h10" stroke="#0b4f94"/></svg><span class="absolute bottom-[5px] h-[3px] w-[6px] rounded-full bg-[#9a9a9a]"></span></button>
    <button aria-label="Microsoft 365"><svg viewBox="0 0 26 26"><path d="M14 2L4 7v11l5 4V11l7-3z" fill="#a98af0"/><path d="M14 2l9 5v10l-6 1v-8l-5-2z" fill="#5cc0f4"/><path d="M4 18l9 6 10-6v-4l-9 3-5-2-5 3z" fill="#a873d4"/><path d="M12 8l5 3v5l-4 3-4-3v-6z" fill="#2c2c50"/></svg></button>
    <button aria-label="YouTube"><svg viewBox="0 0 26 26"><rect x="1" y="4" width="24" height="18" rx="4" fill="#f00"/><path d="M10 9l7 4-7 4z" fill="#fff"/></svg></button>
    <button aria-label="Clock"><svg viewBox="0 0 26 26"><rect x="1" y="1" width="24" height="24" rx="5" fill="#6d7985"/><circle cx="13" cy="13" r="10" fill="#eee"/><path d="M13 14L8 7M13 14l5-6" stroke="#333" stroke-width="2.600"/><path d="M13 14v7" stroke="#d04a18" stroke-width="2.200"/></svg></button>
    <button aria-label="Microsoft Store"><svg viewBox="0 0 26 26"><path d="M7 7V2h12v5" fill="none" stroke="#28b6ec" stroke-width="2"/><path d="M1 5h24v16q0 4-4 4H5q-4 0-4-4z" fill="#f3f3f3"/><path d="M8 10h4.500v4.500H8z" fill="#f25022"/><path d="M13.500 10H18v4.500h-4.500z" fill="#7fba00"/><path d="M8 15.500h4.500V20H8z" fill="#00a4ef"/><path d="M13.500 15.500H18V20h-4.500z" fill="#ffb900"/></svg></button>
    <button aria-label="WhatsApp"><svg viewBox="0 0 26 26"><path d="M2.500 24l1.700-6A11 11 0 1 1 8.500 22.500z" fill="none" stroke="#25d366" stroke-width="2.400"/><path d="M8 7q2-1 3 2l.5 1-1 2q1.500 3 4.500 4l2-1.500 3 1.500q-1 4-4 3.500Q9 18 7.500 11 7 9 8 7z" fill="#25d366"/></svg><span class="absolute bottom-[5px] h-[3px] w-[6px] rounded-full bg-[#9a9a9a]"></span></button>
    <button aria-label="TradingView"><svg viewBox="0 0 26 26"><rect x="1" y="1" width="24" height="24" rx="4" fill="#131722"/><path d="M3 8h8v11H7v-7H3zM17 8h6l-5 11h-4z" fill="#fff"/><circle cx="14" cy="10" r="2" fill="#fff"/></svg></button>
    <button aria-label="Spotify"><svg viewBox="0 0 26 26"><circle cx="13" cy="13" r="12" fill="#1ed760"/><path d="M6 9q8-2.500 15 1.500M6.500 13.500q7-2 12.500 1.500M7.500 17.500q5-1.500 10 1" fill="none" stroke="#111" stroke-width="2" stroke-linecap="round"/></svg><span class="absolute bottom-[5px] h-[3px] w-[6px] rounded-full bg-[#9a9a9a]"></span></button>
    <button aria-label="KiCad" class="h-10! w-10! rounded-md border border-[#363636] bg-[#2a2a2a]"><svg viewBox="0 0 26 26"><rect x="2" y="1" width="22" height="24" rx="4" fill="#2b43c9"/><path d="M7 6v14M14 6l-6 7 6 7" stroke="#fff" stroke-width="3" fill="none"/><path d="M19 12v8" stroke="#fff" stroke-width="3"/><circle cx="19" cy="7.500" r="2" fill="#f06a20"/></svg><span class="absolute bottom-0 h-[3px] w-4 rounded-full bg-[#ffc61a]"></span></button>
  </div>
  <div class="ml-auto flex shrink-0 items-center pr-[17px] pb-px text-[12px]">
    <button aria-label="Hidden icons" class="w-8"><svg width="12" height="12" viewBox="0 0 12 12"><path d="M1 8l5-5 5 5" fill="none" stroke="#fff" stroke-width="1.500"/></svg></button>
    <button aria-label="OneDrive" class="w-8"><svg width="18" height="14" viewBox="0 0 18 14"><path d="M5 12a4 4 0 0 1-.5-7.500 5 5 0 0 1 8.500 0A4 4 0 0 1 14 12z" fill="#d8d8d8"/><path d="M2 11q0-4 4-4l9 5H5q-3 0-3-1z" fill="#fff"/></svg></button>
    <button aria-label="Update" class="w-8"><svg width="20" height="20" viewBox="0 0 20 20" fill="none" stroke="#eee" stroke-width="1.400"><path d="M3 8q2-6 8-5.500 3 .5 5 3.500M16.500 2v4.500h-4M2.500 18v-4.500h4M3 14q2 3 5 3.500"/><circle cx="14" cy="14" r="4.500" fill="#f7941d" stroke="none"/></svg></button>
    <button aria-label="Touch keyboard" class="w-8"><svg width="16" height="16" viewBox="0 0 16 16" fill="none" stroke="#eee" stroke-width="1.200"><rect x="1" y="2" width="14" height="11" rx="1"/><path d="M3 5h10M3 7.500h10" stroke-dasharray="1.500 1"/><path d="M4 10.500h8"/></svg></button>
    <button class="w-11 text-center leading-4">ENG<br>IN</button>
    <button aria-label="Network, sound and battery" class="ml-[6px] gap-[7px]">
      <svg width="18" height="16" viewBox="0 0 18 16" fill="none" stroke="#eee" stroke-width="1.300"><path d="M1 6q8-7 16 0M3.500 8.500q5.500-5 11 0M6 11q3-3 6 0"/><circle cx="9" cy="13" r="1.500" fill="#eee" stroke="none"/></svg>
      <svg width="17" height="14" viewBox="0 0 17 14" fill="none" stroke="#eee" stroke-width="1.200"><path d="M1 5h3l3.500-3.500v11L4 9H1zM11 5l4.500 4.500M15.500 5L11 9.500"/></svg>
      <svg width="17" height="14" viewBox="0 0 17 14" fill="none" stroke="#eee" stroke-width="1.300"><rect x="1" y="2" width="13" height="9" rx="2"/><path d="M15.800 5v3"/><path d="M3 4h2v5H3z" fill="#eee" stroke="none"/></svg>
    </button>
    <button class="w-[79px] justify-end! text-right leading-4">15:29<br>26-04-2024</button>
    <button aria-label="Notifications" class="w-[30px]"><svg width="16" height="18" viewBox="0 0 16 18" fill="none" stroke="#eee" stroke-width="1.300"><path d="M2 13.500l1.500-3V7a4.500 4.500 0 0 1 9 0v3.500l1.500 3zM6 14q2 3 4 0"/></svg></button>
    <button aria-label="Copilot" class="ml-[10px]"><svg width="26" height="28" viewBox="0 0 26 28"><path d="M7 3h7q3 0 2 4l-3 10q-1 3-4 3H5q-5 0-4-5L3 7q1-4 4-4z" fill="#1f8ae0"/><path d="M7 3h6q-2 1-3 4l-2 5H1l2-5q1-4 4-4z" fill="#35c5e8"/><path d="M15 8h6q4 0 3 5l-2 7H10z" fill="#c86ae8"/><path d="M14 14h10l-2 6H12z" fill="#f0607a"/><rect x="6" y="18" width="18" height="9" rx="2" fill="#fbcb14"/><text x="15" y="25" font-size="7" font-weight="800" text-anchor="middle" fill="#222">PRE</text></svg></button>
  </div>
</nav>

<script>
const PITCH = 20.53, TOP = 249;
const leftPins = ['GP0','GP1','GND','GP2','GP3','GP4','GP5','GND','GP6','GP7','GP8','GP9','GND','GP10','GP11','GP12','GP13','GND','GP14','GP15'];
const rightPins = ['VBUS','VSYS','GND','3V3_EN','3V3','ADC_VREF','GP28','AGND','GP27','GP26','RUN','GP22','GND','GP21','GP20','GP19','GP18','GND','GP17','GP16'];
let pads = '', labels = '', grid = '';

function land(cx, cy, square) {
  const shape = square
    ? `<rect x="${cx - 8.5}" y="${cy - 8.5}" width="17" height="17" stroke="#e3b72e" shape-rendering="crispEdges"/><rect x="${cx - 7}" y="${cy - 7}" width="14" height="14" fill="#e3b72e" shape-rendering="crispEdges"/>`
    : `<circle cx="${cx}" cy="${cy}" r="8" fill="#e3b72e"/>`;
  return shape + `<circle cx="${cx}" cy="${cy}" r="4" fill="#001023"/>`;
}
leftPins.forEach((name, i) => {
  const y = Math.round(TOP + i * PITCH);
  const left = name === 'GND', right = rightPins[i].endsWith('GND');
  pads += `<g shape-rendering="crispEdges"><rect x="345.5" y="${y - 8.5}" width="31" height="17" stroke="#c83434"/><rect x="347" y="${y - 7}" width="${left ? 12 : 28}" height="14" fill="#c83434"/><rect x="503.5" y="${y - 8.5}" width="32" height="17" stroke="#c83434"/><rect x="${right ? 521 : 505}" y="${y - 7}" width="${right ? 13 : 29}" height="14" fill="#c83434"/></g>`;
  pads += land(368, y, left) + land(512, y, right);
  labels += `<text transform="translate(346 ${y - 4}) rotate(-45)" text-anchor="end">${name}</text><text transform="translate(541 ${y + 10}) rotate(-45)">${rightPins[i]}</text>`;
});
[420, 440, 461].forEach((x, i) => {
  pads += `<g shape-rendering="crispEdges"><rect x="${x - 8.5}" y="628.5" width="17" height="32" stroke="#c83434"/><rect x="${x - 7}" y="${i === 1 ? 646 : 630}" width="14" height="${i === 1 ? 13 : 29}" fill="#c83434"/></g>` + land(x, 637, i === 1);
});
for (let i = -2; i < 26; i++) for (let j = 0; j < 14; j++) {
  const major = i % 10 === 0 && j % 10 === 0;
  grid += `<rect x="${Math.round(129.6 + i * 40.45)}" y="${Math.round(129.4 + j * 40.45)}" width="1" height="${major ? 2 : 1}" fill="${major ? '#8a8f96' : '#4a545f'}"/>`;
}
document.getElementById('pads').innerHTML = pads;
document.getElementById('labels').innerHTML = labels;
document.getElementById('grid').innerHTML = grid;

const layers = [['F.Cu','#c83434'],['B.Cu','#4d7fc4'],['F.Adhesive','#840084'],['B.Adhesive','#000084'],['F.Paste','#a4938b'],['B.Paste','#00b0b0'],['F.Silkscreen','#f2eda1'],['B.Silkscreen','#e8b2a7'],['F.Mask','#6b3a7c'],['B.Mask','#157f74'],['User.Drawings','#c2c2c2'],['User.Comments','#5994dc'],['User.Eco1','#b4dbd2'],['User.Eco2','#d8c852']];
document.getElementById('layers').innerHTML = layers.map(([name, color], i) => `
  <li class="flex h-[18px] items-center ${i === 0 ? 'bg-[#e0e0e0]' : ''}">
    <svg class="ml-[6px] w-[5px] h-[9px]" viewBox="0 0 5 9">${i === 0 ? '<path d="M0 0l5 4.5L0 9z" fill="#3a3aff"/>' : ''}</svg>
    <svg class="ml-[6px] w-[14px] h-[11px]" viewBox="0 0 14 11" shape-rendering="crispEdges"><rect width="14" height="11" fill="${color}"/>${name.endsWith('Mask') ? '<path d="M0 4h5v4H0zM5 0h5v4H5zM10 4h4v4h-4zM5 8h5v3H5z" fill="#000" fill-opacity=".22"/>' : ''}</svg>
    <button aria-label="Toggle ${name}" class="ml-[6px]"><svg class="size-4" viewBox="0 0 16 16"><circle cx="8" cy="8" r="8" fill="#545454"/><path d="M1.500 8q6.500-7.500 13 0-6.500 7.500-13 0z" fill="#f0f0f0"/><circle cx="8" cy="8" r="2.600" fill="#545454"/><circle cx="8" cy="8" r="1" fill="#f0f0f0"/></svg></button>
    <span class="ml-[5px] text-[11px]">${name}</span>
  </li>`).join('') + `
  <li class="flex h-[18px] items-center"><button aria-label="Toggle next layer" class="ml-[37px]"><svg class="size-4" viewBox="0 0 16 16"><circle cx="8" cy="8" r="8" fill="#545454"/></svg></button></li>`;

const filters = ['All items','Locked items','Footprints','Text','Tracks','Vias','Pads','Graphics','Zones','Rule Areas','Dimensions','Other items'];
document.getElementById('filters').innerHTML = filters.map(name => `
  <label class="flex h-[15px] items-center gap-[3px] whitespace-nowrap"><span class="grid size-[13px] shrink-0"><input type="checkbox" ${name === 'Locked items' ? '' : 'checked'} class="peer [grid-area:1/1] size-[13px] appearance-none rounded-[3px] border border-[#6a6a6a] bg-[#f6f6f6] checked:border-[#005fb8] checked:bg-[#005fb8]"><svg class="pointer-events-none invisible [grid-area:1/1] size-[13px] peer-checked:visible" viewBox="0 0 13 13"><path d="M3.500 6.500l2.200 2.300 4-4.300" fill="none" stroke="#fff"/></svg></span>${name}</label>`).join('');
</script>
</body>
</html>
